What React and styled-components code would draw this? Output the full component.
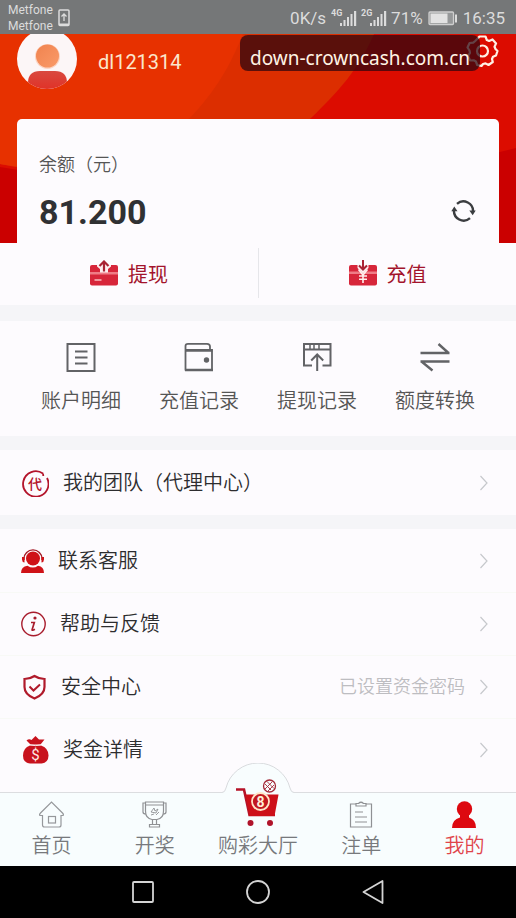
import React from "react";
import styled, { createGlobalStyle } from "styled-components";

const GlobalStyle = createGlobalStyle`
  *, *::before, *::after { box-sizing: border-box; }
  body {
    margin: 0;
    background: #fdfbfe;
    font-family: Roboto, "Noto Sans CJK SC", sans-serif;
    font-weight: 350;
    color: #333;
  }
  a { color: inherit; text-decoration: none; }
  button {
    margin: 0; padding: 0; border: 0; background: none;
    font: inherit; color: inherit; cursor: pointer;
  }
  svg { display: block; flex: none; }
`;

const Screen = styled.div`
  display: flex;
  flex-direction: column;
  min-height: 100vh;
`;

const StatusBar = styled.div`
  display: flex;
  align-items: center;
  height: 34px;
  padding: 2px 11px 0 8px;
  background: #757778;
  color: #dcdcdc;
  font-size: 17px;
  font-weight: 400;
`;

const Carriers = styled.div`
  font-size: 12px;
  line-height: 16px;
  margin-right: 5px;
`;

const StatusRight = styled.div`
  display: flex;
  align-items: center;
  gap: 5px;
  margin-left: auto;
`;

const Signals = styled.div`
  display: flex;
  align-items: center;
  gap: 3px;
`;

const Header = styled.header`
  position: relative;
  isolation: isolate;
  overflow: hidden;
  padding: 0 17px;
  background: #dc0c00;
`;

const Backdrop = styled.svg`
  position: absolute;
  inset: 0;
  z-index: -1;
  width: 100%;
  height: 100%;
`;

const Profile = styled.div`
  display: flex;
  align-items: flex-start;
  height: 85px;
`;

const UserName = styled.h1`
  margin: 15px 0 0 21px;
  font-size: 20px;
  line-height: 26px;
  font-weight: 400;
  color: #fbe6cc;
`;

const SettingsButton = styled.button`
  margin-left: auto;
`;

const SiteBadge = styled.div`
  position: absolute;
  top: 1px;
  right: 36px;
  padding: 10px 10px 0;
  border-radius: 8px;
  background: rgba(45, 5, 15, 0.74);
  color: #fff3e4;
  font-family: "Noto Sans", sans-serif;
  font-weight: 400;
  font-size: 19px;
  line-height: 26px;
`;

const BalanceCard = styled.section`
  display: flex;
  align-items: flex-end;
  justify-content: space-between;
  padding: 32px 23px 11px 22px;
  border-radius: 5px 5px 0 0;
  background: #fdfbfe;
`;

const BalanceLabel = styled.div`
  font-size: 18px;
  line-height: 28px;
  color: #555;
`;

const BalanceValue = styled.div`
  margin-top: 13px;
  font-size: 34px;
  line-height: 40px;
  font-weight: 700;
  color: #303133;
`;

const RefreshButton = styled.button`
  padding-bottom: 9px;
`;

const Actions = styled.div`
  display: grid;
  grid-template-columns: 1fr 1fr;
  padding: 5px 0 7px;
`;

const ActionButton = styled.button`
  display: flex;
  align-items: center;
  justify-content: center;
  gap: 10px;
  height: 50px;
  font-size: 20px;
  font-weight: 400;
  color: #a3142c;

  & + & { border-left: 1px solid #e6e6ea; }
`;

const Band = styled.div`
  height: ${(p) => p.$size}px;
  background: #f5f5f8;
`;

const Records = styled.nav`
  display: grid;
  grid-template-columns: repeat(4, 1fr);
  padding: 21px 22px;
`;

const RecordLink = styled.a`
  display: flex;
  flex-direction: column;
  align-items: center;
  gap: 15px;
  font-size: 20px;
  line-height: 28px;
  color: #555;
`;

const Row = styled.a`
  display: flex;
  align-items: center;
  height: ${(p) => (p.$tall ? 65 : 63)}px;
  padding: 0 27px 0 21px;
  font-size: 20px;
  line-height: 28px;
  color: #2d2d2f;

  & + & { border-top: 1px solid #f8f9f6; }
`;

const RowLabel = styled.span`
  margin-left: 14px;
`;

const RowNote = styled.span`
  margin: 0 14px 0 auto;
  font-size: 18px;
  color: #bdbdc1;
`;

const RowArrow = styled.svg`
  margin-left: ${(p) => (p.$afterNote ? 0 : "auto")};
`;

const Main = styled.main`
  flex: 1;
  padding-bottom: 11px;
`;

const TabBar = styled.nav`
  position: relative;
  display: grid;
  grid-template-columns: repeat(5, 1fr);
  padding: 8px 0 7px;
  border-top: 1px solid #dcdde0;
  background: #f8fdfe;
`;

const TabArch = styled.svg`
  position: absolute;
  top: -30px;
  left: 50%;
  transform: translateX(-50%);
`;

const Tab = styled.a`
  position: relative;
  display: flex;
  flex-direction: column;
  align-items: center;
  gap: 5px;
  font-size: 20px;
  line-height: 26px;
  white-space: nowrap;
  color: ${(p) => (p.$active ? "#e0444a" : "#77797c")};
`;

const TabIcon = styled.span`
  display: flex;
  align-items: flex-end;
  height: 27px;
`;

const SystemNav = styled.div`
  display: flex;
  justify-content: center;
  height: 52px;
  background: #000;
`;

const SystemKeys = styled.div`
  display: grid;
  grid-template-columns: repeat(3, 1fr);
  align-items: center;
  justify-items: center;
  width: 67%;
`;

function PhoneUpIcon() {
  return (
    <svg width="12" height="18" viewBox="0 0 12 18" fill="none" stroke="#dcdcdc">
      <rect x="1" y="1" width="10" height="15.5" rx="1" strokeWidth="1.5" />
      <path d="M1 15.5h10" strokeWidth="2" />
      <path d="M6 12V5M3.500 7.500L6 5l2.500 2.500" strokeWidth="1.300" />
    </svg>
  );
}

function Signal({ label }) {
  return (
    <svg width="27" height="18" viewBox="0 0 27 18" fill="#dcdcdc">
      <text x="0" y="7" fontSize="9" fontWeight="700" fontFamily="Roboto, sans-serif">{label}</text>
      <path d="M9 14h2v3H9zM12.500 11h2v6h-2zM16 8h2v9h-2zM19.500 5h2v12h-2zM23 2h2.200v15H23z" />
    </svg>
  );
}

function BatteryIcon() {
  return (
    <svg width="30" height="15" viewBox="0 0 30 15">
      <rect x="1" y="1" width="24.500" height="12.500" rx="1" fill="#969899" stroke="#cfcfcf" strokeWidth="1.300" />
      <rect x="2.500" y="2.500" width="17" height="9.500" fill="#e2e2e2" />
      <path d="M28 3.500v8" stroke="#dcdcdc" strokeWidth="2" />
    </svg>
  );
}

function HeaderBackdrop() {
  return (
    <Backdrop viewBox="0 0 516 209" preserveAspectRatio="none" aria-hidden="true">
      <path d="M0 133C180 165 400 145 516 114V209H0z" fill="#cb0000" />
      <path d="M0 0H374C359 35 338 58 311 84C240 148 110 152 0 130z" fill="#dc2e00" />
      <path d="M0 0H243C229 34 216 56 190 84C140 130 70 142 0 130z" fill="#e73100" />
    </Backdrop>
  );
}

function Avatar() {
  return (
    <svg width="60" height="55" viewBox="0 0 60 55" role="img" aria-label="头像">
      <defs>
        <linearGradient id="head" x1="0" y1="0" x2="1" y2="1">
          <stop offset="0" stopColor="#f0834f" />
          <stop offset="1" stopColor="#fa9a68" />
        </linearGradient>
        <linearGradient id="body" x1="0" y1="0" x2="0" y2="1">
          <stop offset="0" stopColor="#d9493f" />
          <stop offset="1" stopColor="#e22c22" />
        </linearGradient>
        <clipPath id="round"><circle cx="30" cy="25" r="30" /></clipPath>
      </defs>
      <circle cx="30" cy="25" r="30" fill="#fcf6f7" />
      <g clipPath="url(#round)">
        <path d="M11 60V49Q11 37 23 37H38Q50 37 50 49V60z" fill="url(#body)" />
        <circle cx="30.500" cy="22.500" r="12.500" fill="#fbd5c4" />
        <circle cx="30.500" cy="22" r="11.500" fill="url(#head)" />
      </g>
    </svg>
  );
}

function GearIcon() {
  return (
    <svg width="33" height="34" viewBox="0 0 33 34" fill="none" stroke="#fff0e4" strokeWidth="2.200" strokeLinejoin="round">
      <path d="M13.500 2.500h6l1.300 3.500 2.300 1 3.400-1.600 3.600 4-1.600 3.400 1 2.200 2 2-1.500 4.500-3 1.200-1 2.300.8 3-4.300 3-3-1.600-2.500.6L15.500 32l-4.300-1-1.300-3.500-2.200-1.200-3.500.2-2.200-4.600 2-3-.5-2.400L1.500 13.500 3.600 9l3.600-.3 2-1.700z" />
      <circle cx="16.500" cy="17" r="5.500" />
    </svg>
  );
}

function RefreshIcon() {
  return (
    <svg width="25" height="24" viewBox="0 0 25 24" fill="none" stroke="#3b3d40" strokeWidth="2.400">
      <path d="M6 4.800A9.700 9.700 0 0 1 22 13" />
      <path d="M19 19.200A9.700 9.700 0 0 1 3 11" />
      <path d="M18.300 11.500h6.400l-3 4.800zM0.300 12.300h6.200L3.300 7.500z" fill="#3b3d40" stroke="none" />
    </svg>
  );
}

function WithdrawIcon() {
  return (
    <svg width="28" height="26" viewBox="0 0 28 26">
      <rect y="5" width="28" height="20.500" rx="2" fill="#d7263a" />
      <path d="M0 12h28v2.500H0z" fill="#ef7c86" />
      <path d="M4.500 20h7" stroke="#ffd6d6" strokeWidth="1.300" />
      <path d="M7 5h14v1.500L18 9v3.500h-8V9L7 6.500z" fill="#fdeff1" />
      <path d="M14 11.500V2M9.500 6L14 1.500 18.500 6" fill="none" stroke="#a92334" strokeWidth="2.200" />
    </svg>
  );
}

function DepositIcon() {
  return (
    <svg width="28" height="26" viewBox="0 0 28 26">
      <rect y="5" width="28" height="20.500" rx="2" fill="#d7263a" />
      <path d="M0 11.500h28V14H0z" fill="#ef7c86" />
      <path d="M8.500 5h11v3L14 13.500 8.500 8z" fill="#fdeff1" />
      <path d="M14 0v9M10 5.500l4 4 4-4" fill="none" stroke="#a92334" strokeWidth="2" />
      <path d="M9.500 9.500L14 15l4.500-5.500M14 14.500V23M10 16h8M10 19.300h8" fill="none" stroke="#fff0ee" strokeWidth="1.600" />
    </svg>
  );
}

const recordIconProps = {
  width: 30, height: 30, viewBox: "0 0 30 30", fill: "none", stroke: "#626366", strokeWidth: 2,
};

function LedgerIcon() {
  return (
    <svg {...recordIconProps}>
      <rect x="1.500" y="2" width="27" height="27" />
      <path d="M9 9.500h12.500M9 15.500h12.500M9 21.500h12.500" />
    </svg>
  );
}

function WalletIcon() {
  return (
    <svg {...recordIconProps}>
      <path d="M1.500 4.500V28.500M1.500 8h26.500V28M1.500 8V4Q1.500 1.800 4 1.800H23Q26 1.800 26 4.500V8" strokeWidth="1.800" />
      <path d="M1 8.500h27.500M1 28h28" strokeWidth="2.400" />
      <circle cx="22.500" cy="18" r="2.700" fill="#626366" stroke="none" />
    </svg>
  );
}

function BrowserUpIcon() {
  return (
    <svg {...recordIconProps}>
      <path d="M10 23.500H2V2H28.500V23.500H20.500M2 7.500H28.500" />
      <path d="M8 2v5M12 2v5M17 2v5" strokeWidth="1.500" />
      <path d="M15.200 29V13M9.200 18.500l6-6 6 6" />
    </svg>
  );
}

function SwapIcon() {
  return (
    <svg {...recordIconProps} strokeWidth="2.400">
      <path d="M.5 11H29.500M28.500 11L18.500 2M29.500 19.500H.5M1.500 19.500L12.500 28.500" />
    </svg>
  );
}

function TeamIcon() {
  return (
    <svg width="28" height="28" viewBox="0 0 28 28">
      <path d="M22 4.500A12.700 12.700 0 1 0 26 9M22 4.500l.3 2.500" fill="none" stroke="#b3142b" strokeWidth="1.800" />
      <text x="14" y="19.500" textAnchor="middle" fontSize="14" fontWeight="500" fontFamily="'Noto Sans CJK SC', sans-serif" fill="#b3142b">代</text>
    </svg>
  );
}

function ServiceIcon() {
  return (
    <svg width="23" height="24" viewBox="0 0 23 24" fill="#cf1218">
      <circle cx="12" cy="9.500" r="7" />
      <path d="M3 11V9.500A9 8.600 0 0 1 21 9.500V11" fill="none" stroke="#a51b26" strokeWidth="1.400" />
      <path d="M1 8h2.500v5.500Q1 13 1 10.500zM20.500 8H23v2.500q0 2.500-2.500 3z" />
      <path d="M0 24q0-6.500 6.500-7.300Q12 20.500 17 16.700 23 17.500 23 24z" />
    </svg>
  );
}

function InfoIcon() {
  return (
    <svg width="25" height="26" viewBox="0 0 25 26" fill="none" stroke="#a81c2d" strokeWidth="1.400">
      <circle cx="12.500" cy="13" r="11.700" />
      <circle cx="14" cy="7" r="1.600" fill="#a81c2d" stroke="none" />
      <path d="M10 11.500h3.300l-2.200 7.200q-.3 1.300 2.800-.5" strokeWidth="1.700" />
    </svg>
  );
}

function ShieldIcon() {
  return (
    <svg width="26" height="26" viewBox="0 0 26 26" fill="none" stroke="#b01a2b" strokeWidth="2.200">
      <path d="M13.500 2Q18 5 23.500 5V13q0 7.500-10 11.500Q3.500 20.500 3.500 13V5Q9 5 13.500 2z" />
      <path d="M8.500 12.500l4 4 6.500-6" strokeWidth="2" />
    </svg>
  );
}

function MoneyBagIcon() {
  return (
    <svg width="28" height="28" viewBox="0 0 28 28" fill="#c8121d">
      <path d="M5.500 4.500Q8 2.500 10.500 4L14.500 0 18 3.500 23.500 3.500 19.500 8.500H9.500z" />
      <path d="M9 9.500Q2 12 2 19.500 2 27 9 27.500H20.500Q27.500 26.500 27.500 19.500 27.500 12 20 9.500z" />
      <path d="M9 8.800q5.500 1.800 11 0" fill="none" stroke="#fbe9e9" />
      <text x="14.500" y="24" textAnchor="middle" fontSize="15" fontWeight="400" fontFamily="Roboto, sans-serif" fill="#ffe9e2">$</text>
    </svg>
  );
}

function Chevron({ afterNote }) {
  return (
    <RowArrow $afterNote={afterNote} width="10" height="16" viewBox="0 0 10 16" fill="none" stroke="#c6c8cc" strokeWidth="1.200" aria-hidden="true">
      <path d="M1.500 1l6.500 7-6.500 7" />
    </RowArrow>
  );
}

function HomeIcon() {
  return (
    <svg width="25" height="27" viewBox="0 0 25 27" fill="none" stroke="#96989b" strokeWidth="1.200">
      <path d="M3.500 14.500H1Q0 13.500 1.500 12L12.500 1 23.500 12Q25 13.500 24 14.500H22V24Q22 26 20 26H5.500Q3.500 26 3.500 24z" />
      <rect x="9.500" y="15.500" width="7" height="6.500" />
    </svg>
  );
}

function TrophyIcon() {
  return (
    <svg width="25" height="27" viewBox="0 0 25 27" fill="none" stroke="#8f9194" strokeWidth="1.200">
      <path d="M3.500 1H21.500V10Q21.500 17.500 15 18.500H10Q3.500 17.500 3.500 10zM3.500 4H21.500" />
      <path d="M3.500 2H1V11Q1 13 4 13M21.500 2H24V11Q24 13 21 13" />
      <path d="M10.500 18.500V23M14.500 18.500V23M7.500 23.500H17.500V26H7.500z" />
      <path d="M9 11l3-4 1 3 3-2-2 4zM9 14l3-1M14 14l3-3" strokeWidth=".9" />
    </svg>
  );
}

function CartIcon() {
  return (
    <svg width="46" height="50" viewBox="0 0 46 50">
      <path d="M1 11.500H9L14.500 37H40" fill="none" stroke="#b51328" strokeWidth="2.600" />
      <path d="M10.500 16.500H43.500L39.500 38H14.500z" fill="#cd1019" />
      <circle cx="25.500" cy="23.500" r="8.500" fill="#c21820" stroke="#ffe5c8" strokeWidth="1.800" />
      <text x="25.500" y="28.500" textAnchor="middle" fontSize="14" fontWeight="700" fontFamily="Roboto, sans-serif" fill="#fff0d8" stroke="none">8</text>
      <g fill="none" stroke="#a32a39">
        <circle cx="34.500" cy="8" r="6" strokeWidth="1.300" />
        <path d="M30 6l6 6M32 3.500l7 7M30 11l7-7M33 13l6-6" strokeWidth=".9" />
      </g>
      <circle cx="15.500" cy="45" r="3" fill="#b0132a" />
      <circle cx="35" cy="45" r="3" fill="#b0132a" />
    </svg>
  );
}

function ClipboardIcon() {
  return (
    <svg width="24" height="27" viewBox="0 0 24 27" fill="none" stroke="#8f9194" strokeWidth="1.200">
      <path d="M7 3H1.500V26H22.500V3H17" />
      <path d="M7 5V2.500H9.500Q12 0 14.500 2.500H17V5z" />
      <path d="M6 11H14M6 16H18M6 21H18" />
    </svg>
  );
}

function PersonIcon() {
  return (
    <svg width="24" height="27" viewBox="0 0 24 27" fill="#dd0910">
      <circle cx="12.500" cy="8" r="7.700" />
      <path d="M8 13h9v3.500q7 2 7 10.500H0q0-8.500 8-10.500z" />
    </svg>
  );
}

const records = [
  { label: "账户明细", Icon: LedgerIcon },
  { label: "充值记录", Icon: WalletIcon },
  { label: "提现记录", Icon: BrowserUpIcon },
  { label: "额度转换", Icon: SwapIcon },
];

const menu = [
  { label: "联系客服", Icon: ServiceIcon },
  { label: "帮助与反馈", Icon: InfoIcon },
  { label: "安全中心", Icon: ShieldIcon, note: "已设置资金密码" },
  { label: "奖金详情", Icon: MoneyBagIcon },
];

const tabs = [
  { label: "首页", Icon: HomeIcon },
  { label: "开奖", Icon: TrophyIcon },
  { label: "购彩大厅", Icon: CartIcon },
  { label: "注单", Icon: ClipboardIcon },
  { label: "我的", Icon: PersonIcon, active: true },
];

function MenuRow({ label, Icon, note, tall }) {
  return (
    <Row href="#" $tall={tall}>
      <Icon />
      <RowLabel>{label}</RowLabel>
      {note && <RowNote>{note}</RowNote>}
      <Chevron afterNote={Boolean(note)} />
    </Row>
  );
}

export default function App() {
  return (
    <Screen>
      <GlobalStyle />
      <StatusBar>
        <Carriers>
          <div>Metfone</div>
          <div>Metfone</div>
        </Carriers>
        <PhoneUpIcon />
        <StatusRight>
          <span>0K/s</span>
          <Signals>
            <Signal label="4G" />
            <Signal label="2G" />
            <span>71%</span>
          </Signals>
          <BatteryIcon />
          <span>16:35</span>
        </StatusRight>
      </StatusBar>

      <Header>
        <HeaderBackdrop />
        <Profile>
          <Avatar />
          <UserName>dl121314</UserName>
          <SettingsButton type="button" aria-label="设置"><GearIcon /></SettingsButton>
        </Profile>
        <SiteBadge>down-crowncash.com.cn</SiteBadge>
        <BalanceCard>
          <div>
            <BalanceLabel>余额（元）</BalanceLabel>
            <BalanceValue>81.200</BalanceValue>
          </div>
          <RefreshButton type="button" aria-label="刷新余额"><RefreshIcon /></RefreshButton>
        </BalanceCard>
      </Header>

      <Main>
        <Actions>
          <ActionButton type="button"><WithdrawIcon />提现</ActionButton>
          <ActionButton type="button"><DepositIcon />充值</ActionButton>
        </Actions>
        <Band $size={16} />
        <Records>
          {records.map(({ label, Icon }) => (
            <RecordLink href="#" key={label}><Icon />{label}</RecordLink>
          ))}
        </Records>
        <Band $size={14} />
        <MenuRow label="我的团队（代理中心）" Icon={TeamIcon} tall />
        <Band $size={14} />
        {menu.map((item) => <MenuRow key={item.label} {...item} />)}
      </Main>

      <TabBar>
        <TabArch width="72" height="32" viewBox="0 0 72 32" aria-hidden="true">
          <path d="M0 29.500Q3 29.500 4 25A33 33 0 0 1 68 25Q69 29.500 72 29.500V32H0z" fill="#f8fdfe" />
          <path d="M0 29.500Q3 29.500 4 25A33 33 0 0 1 68 25Q69 29.500 72 29.500" fill="none" stroke="#d9dbde" />
        </TabArch>
        {tabs.map(({ label, Icon, active }) => (
          <Tab href="#" key={label} $active={active} aria-current={active ? "page" : undefined}>
            <TabIcon><Icon /></TabIcon>
            {label}
          </Tab>
        ))}
      </TabBar>

      <SystemNav>
        <SystemKeys>
          <button type="button" aria-label="最近任务">
            <svg width="22" height="22" viewBox="0 0 22 22" fill="none" stroke="#d4d4d4" strokeWidth="1.800">
              <rect x="1" y="1" width="20" height="20" rx="1" />
            </svg>
          </button>
          <button type="button" aria-label="主屏幕">
            <svg width="24" height="24" viewBox="0 0 24 24" fill="none" stroke="#d4d4d4" strokeWidth="1.800">
              <circle cx="12" cy="12" r="11" />
            </svg>
          </button>
          <button type="button" aria-label="返回">
            <svg width="22" height="24" viewBox="0 0 22 24" fill="none" stroke="#d4d4d4" strokeWidth="1.800" strokeLinejoin="round">
              <path d="M20.500 1V23L1.500 12z" />
            </svg>
          </button>
        </SystemKeys>
      </SystemNav>
    </Screen>
  );
}
